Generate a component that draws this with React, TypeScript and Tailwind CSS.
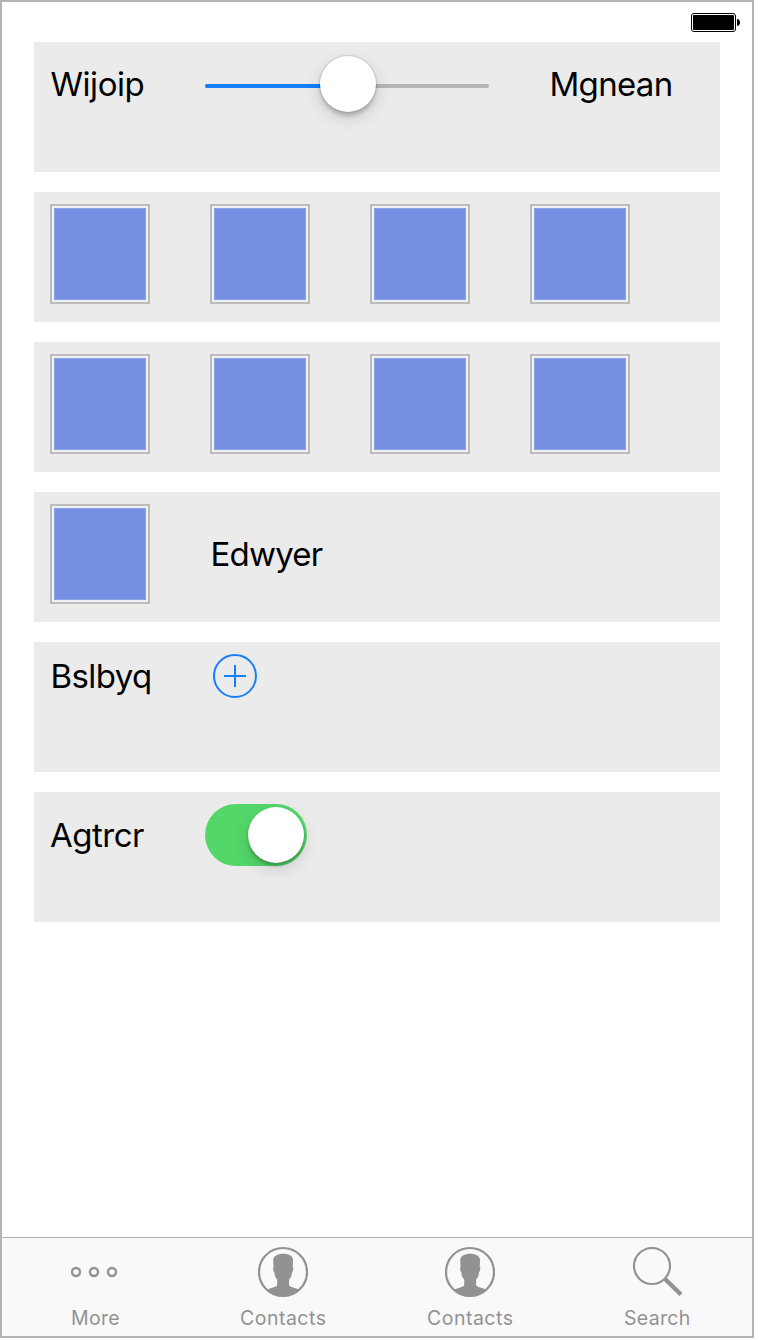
import type { ReactNode } from "react";

function Row({ children }: { children?: ReactNode }) {
  return <section className="flex h-[130px] w-[686px] items-start bg-[#ebebeb] pl-4 pt-3">{children}</section>;
}

function Label({ text, className }: { text: string; className: string }) {
  return <span className={`block shrink-0 whitespace-nowrap text-[33px] leading-10 text-black ${className}`}>{text}</span>;
}

function Tile() {
  return (
    <div className="size-[100px] shrink-0 border-2 border-[#bcbcbc] bg-[#f0f1f6] p-[2px]">
      <div className="size-full border border-[#8da1e7] bg-[#758fe2]" />
    </div>
  );
}

function TileRow() {
  return (
    <Row>
      <div className="flex gap-[60px]">
        <Tile />
        <Tile />
        <Tile />
        <Tile />
      </div>
    </Row>
  );
}

function Battery() {
  return (
    <svg width="50" height="20" viewBox="0 0 50 20" aria-hidden="true">
      <rect x="0.5" y="0.5" width="44" height="18" rx="2.5" fill="white" stroke="black" />
      <rect x="2" y="2" width="41" height="15" rx="1" fill="black" />
      <path d="M46 6c2 0 3 1.6 3 3.5S48 13 46 13Z" fill="black" />
    </svg>
  );
}

function MoreIcon() {
  return (
    <svg width="50" height="52" viewBox="0 0 50 52" fill="none" stroke="#929292" strokeWidth="2.4">
      <circle cx="5" cy="26" r="4" />
      <circle cx="23" cy="26" r="4" />
      <circle cx="41" cy="26" r="4" />
    </svg>
  );
}

function ContactIcon() {
  return (
    <svg width="50" height="52" viewBox="0 0 50 52">
      <circle cx="25" cy="26" r="24" fill="none" stroke="#929292" strokeWidth="2.2" />
      <path
        d="M15.2 14.2C15.3 10 19.4 7.7 25.2 7.7S35 10 35.1 14.2L34.7 21c1 .5.6 3.8-.6 5.2-.5 3.7-1.3 5.8-3 7.3v5.6c.3 2 5 2.3 10.5 4.7A24 24 0 0 1 8.8 43.8C14.2 41.4 18.8 41 19.2 39v-5.5c-1.6-1.6-2.5-3.7-2.9-7.3-1.3-1.5-1.7-4.7-.7-5.2Z"
        fill="#929292"
      />
    </svg>
  );
}

function SearchIcon() {
  return (
    <svg width="50" height="52" viewBox="0 0 50 52" fill="none" stroke="#929292">
      <circle cx="20" cy="20" r="18" strokeWidth="2.2" />
      <path d="m33 33 16 15.5" strokeWidth="4.4" />
    </svg>
  );
}

function Tab({ icon, text, className }: { icon: ReactNode; text: string; className: string }) {
  return (
    <button className="flex flex-1 flex-col items-center pt-2 text-[#929292]">
      {icon}
      <span className={`mt-2 block whitespace-nowrap text-[19.5px] leading-6 ${className}`}>{text}</span>
    </button>
  );
}

export default function App() {
  return (
    <div className="h-[1340px] w-[760px] bg-white font-['Inter',sans-serif]">
      <main className="flex h-[1338px] w-[754px] flex-col border-2 border-[#b4b4b4] bg-white">
        <header className="flex h-10 shrink-0 justify-end pr-[11px] pt-[11px]">
          <Battery />
        </header>

        <div className="flex flex-1 flex-col gap-5 pl-8">
          <Row>
            <Label text="Wijoip" className="mt-[10px] w-[155px] pl-[0.5px] tracking-[-0.45px]" />
            <div className="relative mt-[30px] flex h-1 w-[284px] overflow-visible rounded-full bg-[#b5b5b5]">
              <div className="h-full w-1/2 rounded-l-full bg-[#147efb]" />
              <div className="absolute left-[115px] top-[-28px] size-14 rounded-full bg-white shadow-[0_0_1px_1px_rgba(0,0,0,0.1),0_4px_4px_rgba(0,0,0,0.18),0_6px_18px_rgba(0,0,0,0.14)]" />
            </div>
            <Label text="Mgnean" className="ml-[60.5px] mt-[10px] tracking-[-0.7px]" />
          </Row>
          <TileRow />
          <TileRow />
          <Row>
            <Tile />
            <Label text="Edwyer" className="ml-[60.5px] mt-[30px] tracking-[-0.8px]" />
          </Row>
          <Row>
            <Label text="Bslbyq" className="mt-[2px] w-[163px] pl-[0.5px] tracking-[-0.6px]" />
            <svg width="44" height="44" viewBox="0 0 44 44" fill="none" stroke="#147efb" strokeWidth="2">
              <circle cx="22" cy="22" r="21" />
              <path d="M11 22h22M22 11v22" />
            </svg>
          </Row>
          <Row>
            <Label text="Agtrcr" className="mt-[11px] w-[155px] tracking-[-0.5px]" />
            <div className="flex h-[62px] w-[102px] items-center justify-end rounded-full bg-[#53d769] pr-[3px]">
              <div className="size-14 rounded-full bg-white shadow-[0_0_1px_rgba(0,0,0,0.15),0_3px_3px_rgba(0,0,0,0.2),0_6px_16px_rgba(0,0,0,0.15)]" />
            </div>
          </Row>
        </div>

        <nav className="flex h-[99px] shrink-0 border-t border-[#b2b2b2] bg-[#f9f9f9] pr-[2px]">
          <Tab icon={<MoreIcon />} text="More" className="tracking-[0.3px]" />
          <Tab icon={<ContactIcon />} text="Contacts" className="pl-[1.5px] tracking-[0.48px]" />
          <Tab icon={<ContactIcon />} text="Contacts" className="pl-[1.5px] tracking-[0.48px]" />
          <Tab icon={<SearchIcon />} text="Search" className="pl-[1.5px] tracking-[0.3px]" />
        </nav>
      </main>
    </div>
  );
}
